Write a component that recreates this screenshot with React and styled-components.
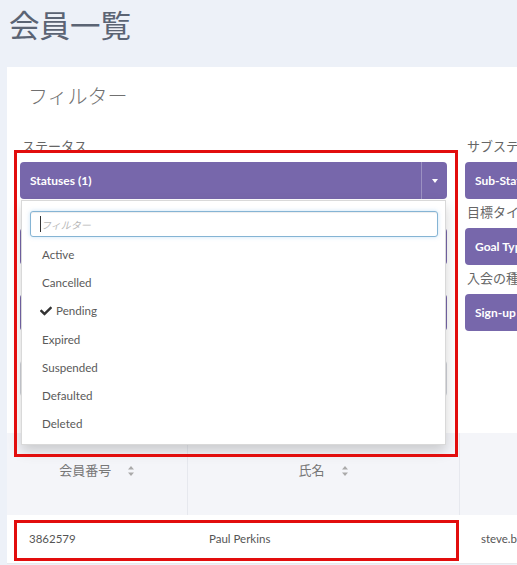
import React from "react";
import styled, { createGlobalStyle } from "styled-components";

const GlobalStyle = createGlobalStyle`
  body {
    margin: 0;
    background: #edf1f8;
    overflow: hidden;
    font-family: Lato, "Noto Sans CJK JP", sans-serif;
  }
  * { box-sizing: border-box; }
`;

const jp = `"Noto Sans CJK JP", "Noto Sans", sans-serif`;
const purple = "#7767ab";

const Page = styled.div`
  position: relative;
  width: 1100px;
  padding-top: 4px;
`;

const Title = styled.h1`
  margin: 0 0 23px 9px;
  font-family: ${jp};
  font-size: 30.5px;
  font-weight: 400;
  line-height: 40px;
  color: #5b6474;
`;

const Card = styled.section`
  margin-left: 7px;
  background: #fff;
`;

const CardHeader = styled.h2`
  margin: 0;
  padding: 15px 21px 0;
  font-family: ${jp};
  font-size: 20px;
  font-weight: 300;
  line-height: 28px;
  color: #707070;
`;

const FilterBody = styled.div`
  display: grid;
  grid-template-columns: 427px 427px;
  column-gap: 18px;
  align-items: start;
  padding: 23px 13px 36px;
`;

const Column = styled.div`
  display: flex;
  flex-direction: column;
`;

const FieldLabel = styled.label`
  margin: 3px 0 6px 2px;
  font-family: ${jp};
  font-size: 13px;
  line-height: 20px;
  color: #666;
`;

const SelectWrap = styled.div`
  position: relative;
`;

const SelectButton = styled.div`
  display: flex;
  align-items: center;
  height: 37px;
  padding-left: 10px;
  border-radius: 4px;
  background: ${purple};
  color: #fff;
  font-size: 12px;
  font-weight: 700;
  white-space: nowrap;
  overflow: hidden;
`;

const CaretBox = styled.span`
  display: flex;
  align-items: center;
  justify-content: center;
  margin-left: auto;
  width: 26px;
  height: 100%;
  border-left: 1px solid rgba(255, 255, 255, 0.28);

  &::after {
    content: "";
    border-left: 3px solid transparent;
    border-right: 3px solid transparent;
    border-top: 4px solid #fff;
  }
`;

const TextField = styled.div`
  height: 37px;
  border: 1px solid #cfd2d8;
  border-radius: 4px;
  background: #fff;
`;

const Menu = styled.div`
  position: absolute;
  top: 38px;
  left: 1px;
  right: 1px;
  z-index: 10;
  padding: 10px 0 6px;
  background: #fff;
  border: 1px solid rgba(0, 0, 0, 0.15);
  box-shadow: 0 6px 12px rgba(0, 0, 0, 0.175);
`;

const SearchWrap = styled.div`
  position: relative;
  margin: 0 7px 3px 8px;
`;

const SearchInput = styled.input`
  display: block;
  width: 100%;
  height: 26px;
  padding: 0 10px;
  border: 1px solid #85b4d4;
  border-radius: 3px;
  outline: none;
  box-shadow: inset 0 1px 1px rgba(0, 0, 0, 0.075), 0 0 4px rgba(102, 175, 233, 0.35);
  font-family: ${jp};
  font-size: 10px;
  font-style: italic;

  &::placeholder {
    color: #b8b8b8;
  }
`;

const TextCursor = styled.span`
  position: absolute;
  left: 10px;
  top: 5px;
  width: 1px;
  height: 16px;
  background: #333;
`;

const MenuItem = styled.div`
  display: flex;
  align-items: center;
  gap: 4px;
  height: 28.3px;
  padding-left: ${({ $selected }) => ($selected ? "18px" : "20px")};
  font-size: 11.6px;
  color: #5a5a5a;
`;

const CheckIcon = styled.svg`
  width: 12px;
  height: 12px;
  fill: #333;
`;

const Table = styled.table`
  width: 100%;
  border-collapse: collapse;
  table-layout: fixed;
`;

const HeadCell = styled.th`
  width: ${({ $w }) => $w || "auto"};
  height: 82px;
  padding-top: 27px;
  vertical-align: top;
  background: #f4f5f9;
  border-right: 1px solid #e6e8ee;
  font-family: ${jp};
  font-size: 13px;
  font-weight: 400;
  line-height: 20px;
  color: #777;
  text-align: center;
`;

const SortIcon = styled.svg`
  width: 6px;
  height: 10px;
  margin-left: 17px;
  vertical-align: -1px;
  fill: #aaa;
`;

const BodyCell = styled.td`
  height: 48px;
  padding: 0 22px;
  border-bottom: 1px solid #e8e9ec;
  font-size: 11.5px;
  color: #555;
  white-space: nowrap;
  overflow: hidden;
`;

const Highlight = styled.div`
  position: absolute;
  z-index: 20;
  left: ${({ $x }) => $x}px;
  top: ${({ $y }) => $y}px;
  width: ${({ $w }) => $w}px;
  height: ${({ $h }) => $h}px;
  border: 3px solid #e20d0d;
  pointer-events: none;
`;

const statuses = ["Active", "Cancelled", "Pending", "Expired", "Suspended", "Defaulted", "Deleted"];

const Check = () => (
  <CheckIcon viewBox="0 0 512 512">
    <path d="M173.9 439.4l-166.4-166.4c-10-10-10-26.2 0-36.2l36.2-36.2c10-10 26.2-10 36.2 0L192 312.7 432.1 72.6c10-10 26.2-10 36.2 0l36.2 36.2c10 10 10 26.2 0 36.2L210.1 439.4c-10 10-26.2 10-36.2 0z" />
  </CheckIcon>
);

const Sort = () => (
  <SortIcon viewBox="0 0 6 10">
    <path d="M3 0L6 3.5H0z M3 10L0 6.5H6z" />
  </SortIcon>
);

const App = () => {
  return (
    <Page>
      <GlobalStyle />
      <Title>会員一覧</Title>
      <Card>
        <CardHeader>フィルター</CardHeader>
        <FilterBody>
          <Column>
            <FieldLabel>ステータス</FieldLabel>
            <SelectWrap>
              <SelectButton>
                Statuses (1)
                <CaretBox />
              </SelectButton>
              <Menu>
                <SearchWrap>
                  <SearchInput placeholder="フィルター" />
                  <TextCursor />
                </SearchWrap>
                {statuses.map((s) => (
                  <MenuItem key={s} $selected={s === "Pending"}>
                    {s === "Pending" && <Check />}
                    {s}
                  </MenuItem>
                ))}
              </Menu>
            </SelectWrap>
            <FieldLabel>会員種別</FieldLabel>
            <SelectButton>Membership Types</SelectButton>
            <FieldLabel>プラン</FieldLabel>
            <SelectButton>Plans</SelectButton>
            <FieldLabel>キーワード</FieldLabel>
            <TextField />
          </Column>
          <Column>
            <FieldLabel>サブステータス</FieldLabel>
            <SelectButton>Sub-Statuses</SelectButton>
            <FieldLabel>目標タイプ</FieldLabel>
            <SelectButton>Goal Types</SelectButton>
            <FieldLabel>入会の種類</FieldLabel>
            <SelectButton>Sign-up Types</SelectButton>
          </Column>
        </FilterBody>
        <Table>
          <thead>
            <tr>
              <HeadCell $w="180px">
                会員番号
                <Sort />
              </HeadCell>
              <HeadCell $w="272px">
                氏名
                <Sort />
              </HeadCell>
              <HeadCell>メールアドレス</HeadCell>
            </tr>
          </thead>
          <tbody>
            <tr>
              <BodyCell>3862579</BodyCell>
              <BodyCell>Paul Perkins</BodyCell>
              <BodyCell>steve.bennett@example.com</BodyCell>
            </tr>
          </tbody>
        </Table>
      </Card>
      <Highlight $x={14} $y={150} $w={444} $h={307} />
      <Highlight $x={14} $y={520} $w={445} $h={41} />
    </Page>
  );
};

export default App;
